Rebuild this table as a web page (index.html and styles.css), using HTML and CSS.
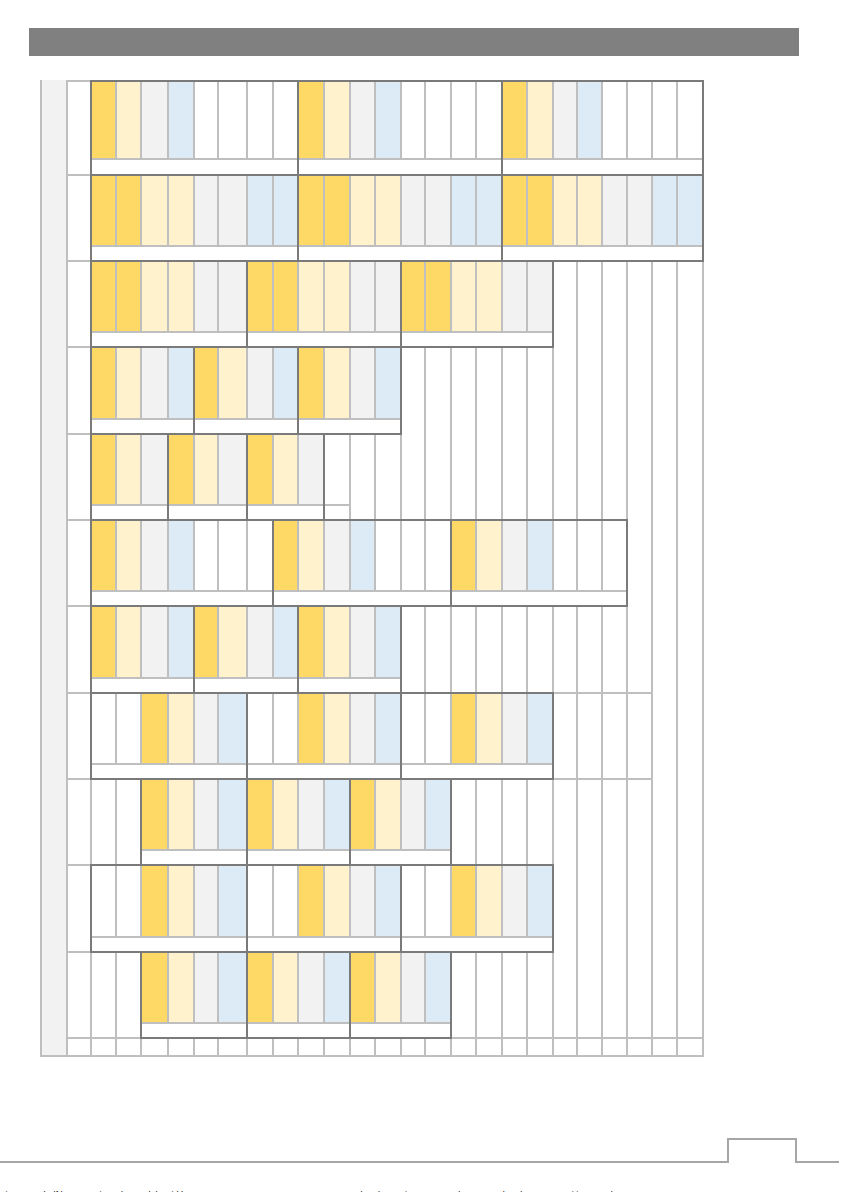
FILE: index.html
```html
<!DOCTYPE html>
<html lang="en">
<head>
<meta charset="utf-8">
<title>Layout sheet</title>
<link rel="stylesheet" href="styles.css">
</head>
<body>
<div class="page">
  <div class="title-bar"></div>

  <div class="sheet">
    <div class="side"></div>
    <div class="rows">
      <!-- row 1 -->
      <div class="row first">
        <div class="hd"></div>
        <div class="blk fr s8"><div class="y"></div><div class="ly"></div><div class="g"></div><div class="b"></div><div></div><div></div><div></div><div></div><div class="lb"></div></div>
        <div class="blk fr s8"><div class="y"></div><div class="ly"></div><div class="g"></div><div class="b"></div><div></div><div></div><div></div><div></div><div class="lb"></div></div>
        <div class="blk fr s8"><div class="y"></div><div class="ly"></div><div class="g"></div><div class="b"></div><div></div><div></div><div></div><div></div><div class="lb"></div></div>
      </div>
      <!-- row 2 -->
      <div class="row">
        <div class="hd"></div>
        <div class="blk fr s8"><div class="y"></div><div class="y"></div><div class="ly"></div><div class="ly"></div><div class="g"></div><div class="g"></div><div class="b"></div><div class="b"></div><div class="lb"></div></div>
        <div class="blk fr s8"><div class="y"></div><div class="y"></div><div class="ly"></div><div class="ly"></div><div class="g"></div><div class="g"></div><div class="b"></div><div class="b"></div><div class="lb"></div></div>
        <div class="blk fr s8"><div class="y"></div><div class="y"></div><div class="ly"></div><div class="ly"></div><div class="g"></div><div class="g"></div><div class="b"></div><div class="b"></div><div class="lb"></div></div>
      </div>
      <!-- row 3 -->
      <div class="row">
        <div class="hd"></div>
        <div class="blk fr s6"><div class="y"></div><div class="y"></div><div class="ly"></div><div class="ly"></div><div class="g"></div><div class="g"></div><div class="lb"></div></div>
        <div class="blk fr s6"><div class="y"></div><div class="y"></div><div class="ly"></div><div class="ly"></div><div class="g"></div><div class="g"></div><div class="lb"></div></div>
        <div class="blk fr s6"><div class="y"></div><div class="y"></div><div class="ly"></div><div class="ly"></div><div class="g"></div><div class="g"></div><div class="lb"></div></div>
        <div class="e"></div><div class="e"></div><div class="e"></div><div class="e"></div><div class="e"></div><div class="e"></div>
      </div>
      <!-- row 4 -->
      <div class="row tall">
        <div class="hd"></div>
        <div class="blk fr s4"><div class="y"></div><div class="ly"></div><div class="g"></div><div class="b"></div><div class="lb"></div></div>
        <div class="blk fr s4"><div class="y"></div><div class="ly"></div><div class="g"></div><div class="b"></div><div class="lb"></div></div>
        <div class="blk fr s4"><div class="y"></div><div class="ly"></div><div class="g"></div><div class="b"></div><div class="lb"></div></div>
        <div class="e"></div><div class="e"></div><div class="e"></div><div class="e"></div><div class="e"></div><div class="e"></div>
        <div class="e mu"></div><div class="e mu"></div><div class="e mu"></div><div class="e mu"></div><div class="e mu"></div><div class="e mu"></div>
      </div>
      <!-- row 5 -->
      <div class="row">
        <div class="hd"></div>
        <div class="blk fr s3"><div class="y"></div><div class="ly"></div><div class="g"></div><div class="lb"></div></div>
        <div class="blk fr s3"><div class="y"></div><div class="ly"></div><div class="g"></div><div class="lb"></div></div>
        <div class="blk fr s3"><div class="y"></div><div class="ly"></div><div class="g"></div><div class="lb"></div></div>
        <div class="blk s1"><div></div><div class="lb"></div></div>
        <div class="e"></div><div class="e"></div>
        <div class="e mu"></div><div class="e mu"></div><div class="e mu"></div><div class="e mu"></div><div class="e mu"></div><div class="e mu"></div>
        <div class="e mu"></div><div class="e mu"></div><div class="e mu"></div><div class="e mu"></div><div class="e mu"></div><div class="e mu"></div>
      </div>
      <!-- row 6 -->
      <div class="row">
        <div class="hd"></div>
        <div class="blk fr s7"><div class="y"></div><div class="ly"></div><div class="g"></div><div class="b"></div><div></div><div></div><div></div><div class="lb"></div></div>
        <div class="blk fr s7"><div class="y"></div><div class="ly"></div><div class="g"></div><div class="b"></div><div></div><div></div><div></div><div class="lb"></div></div>
        <div class="blk fr s7"><div class="y"></div><div class="ly"></div><div class="g"></div><div class="b"></div><div></div><div></div><div></div><div class="lb"></div></div>
        <div class="e mu"></div><div class="e mu"></div><div class="e mu"></div>
      </div>
      <!-- row 7 -->
      <div class="row tall">
        <div class="hd"></div>
        <div class="blk fr s4"><div class="y"></div><div class="ly"></div><div class="g"></div><div class="b"></div><div class="lb"></div></div>
        <div class="blk fr s4"><div class="y"></div><div class="ly"></div><div class="g"></div><div class="b"></div><div class="lb"></div></div>
        <div class="blk fr s4"><div class="y"></div><div class="ly"></div><div class="g"></div><div class="b"></div><div class="lb"></div></div>
        <div class="e"></div><div class="e"></div><div class="e"></div><div class="e"></div><div class="e"></div><div class="e"></div><div class="e"></div><div class="e"></div><div class="e"></div>
        <div class="e mu"></div><div class="e mu"></div><div class="e mu"></div>
      </div>
      <!-- row 8 -->
      <div class="row">
        <div class="hd"></div>
        <div class="blk fr s6"><div></div><div></div><div class="y"></div><div class="ly"></div><div class="g"></div><div class="b"></div><div class="lb"></div></div>
        <div class="blk fr s6"><div></div><div></div><div class="y"></div><div class="ly"></div><div class="g"></div><div class="b"></div><div class="lb"></div></div>
        <div class="blk fr s6"><div></div><div></div><div class="y"></div><div class="ly"></div><div class="g"></div><div class="b"></div><div class="lb"></div></div>
        <div class="e"></div><div class="e"></div><div class="e"></div><div class="e"></div>
        <div class="e mu"></div><div class="e mu"></div>
      </div>
      <!-- row 9 -->
      <div class="row">
        <div class="hd"></div>
        <div class="e"></div><div class="e"></div>
        <div class="blk fr s4"><div class="y"></div><div class="ly"></div><div class="g"></div><div class="b"></div><div class="lb"></div></div>
        <div class="blk fr s4"><div class="y"></div><div class="ly"></div><div class="g"></div><div class="b"></div><div class="lb"></div></div>
        <div class="blk fr s4"><div class="y"></div><div class="ly"></div><div class="g"></div><div class="b"></div><div class="lb"></div></div>
        <div class="e"></div><div class="e"></div><div class="e"></div><div class="e"></div><div class="e"></div><div class="e"></div><div class="e"></div><div class="e"></div>
        <div class="e mu"></div><div class="e mu"></div>
      </div>
      <!-- row 10 -->
      <div class="row tall">
        <div class="hd"></div>
        <div class="blk fr s6"><div></div><div></div><div class="y"></div><div class="ly"></div><div class="g"></div><div class="b"></div><div class="lb"></div></div>
        <div class="blk fr s6"><div></div><div></div><div class="y"></div><div class="ly"></div><div class="g"></div><div class="b"></div><div class="lb"></div></div>
        <div class="blk fr s6"><div></div><div></div><div class="y"></div><div class="ly"></div><div class="g"></div><div class="b"></div><div class="lb"></div></div>
        <div class="e mu"></div><div class="e mu"></div><div class="e mu"></div><div class="e mu"></div><div class="e mu"></div><div class="e mu"></div>
      </div>
      <!-- row 11 -->
      <div class="row">
        <div class="hd"></div>
        <div class="e"></div><div class="e"></div>
        <div class="blk fr s4"><div class="y"></div><div class="ly"></div><div class="g"></div><div class="b"></div><div class="lb"></div></div>
        <div class="blk fr s4"><div class="y"></div><div class="ly"></div><div class="g"></div><div class="b"></div><div class="lb"></div></div>
        <div class="blk fr s4"><div class="y"></div><div class="ly"></div><div class="g"></div><div class="b"></div><div class="lb"></div></div>
        <div class="e"></div><div class="e"></div><div class="e"></div><div class="e"></div>
        <div class="e mu"></div><div class="e mu"></div><div class="e mu"></div><div class="e mu"></div><div class="e mu"></div><div class="e mu"></div>
      </div>
      <!-- row 12 -->
      <div class="row last">
        <div class="hd"></div>
        <div class="e"></div><div class="e"></div><div class="e"></div><div class="e"></div><div class="e"></div><div class="e"></div>
        <div class="e"></div><div class="e"></div><div class="e"></div><div class="e"></div><div class="e"></div><div class="e"></div>
        <div class="e"></div><div class="e"></div><div class="e"></div><div class="e"></div><div class="e"></div><div class="e"></div>
        <div class="e"></div><div class="e"></div><div class="e"></div><div class="e"></div><div class="e"></div><div class="e"></div>
      </div>
    </div>
  </div>

  <div class="footer">
    <div class="f-line f-left"></div>
    <div class="f-tab"></div>
    <div class="f-line f-right"></div>
  </div>

  <div class="notes">
    <span class="n1">Fig. 4.12 Shelf layout variants by module width</span>
    <span class="n2">Colour key: primary, secondary, neutral and reserve positions per bay</span>
  </div>
</div>
</body>
</html>
```

FILE: styles.css
```css
* {
  box-sizing: border-box;
  margin: 0;
  padding: 0;
}

html,
body {
  width: 843px;
  height: 1192px;
  overflow: hidden;
  background: #ffffff;
}

body {
  font-family: "Liberation Sans", Arial, sans-serif;
  color: #000000;
}

.page {
  display: flex;
  flex-direction: column;
  align-items: flex-start;
}

.title-bar {
  margin: 28px 0 0 29px;
  width: 770px;
  height: 28px;
  background: #808080;
}

/* ---------- sheet ---------- */
.sheet {
  margin: 24px 0 0 40px;
  display: flex;
  gap: 2px;
  padding-left: 2px;
  background: #bfbfbf;
}

.side {
  width: 24px;
  margin-bottom: 2px;
  background: #f2f2f2;
}

.rows {
  display: flex;
  flex-direction: column;
  gap: 2px;
  padding: 2px 2px 2px 0;
}

.row {
  display: grid;
  grid-template-columns:
    22px 23px 23px 25px 24px 22px 27px 24px 23px 24px 24px 23px 24px
    22px 24px 23px 24px 23px 24px 22px 23px 23px 23px 23px 24px;
  grid-template-rows: 69px 13px;
  gap: 2px;
}

.row.first {
  grid-template-rows: 76px 14px;
}

.row.tall {
  grid-template-rows: 70px 13px;
}

.row.last {
  grid-template-rows: 16px;
}

.hd,
.e {
  grid-row: 1 / -1;
  background: #ffffff;
}

.mu {
  margin-top: -2px;
}

.blk {
  grid-row: 1 / -1;
  display: grid;
  grid-template-columns: subgrid;
  grid-template-rows: subgrid;
  background: #bfbfbf;
}

.fr {
  outline: 2px solid #7a7a7a;
}

.s1 { grid-column: span 1; }
.s3 { grid-column: span 3; }
.s4 { grid-column: span 4; }
.s6 { grid-column: span 6; }
.s7 { grid-column: span 7; }
.s8 { grid-column: span 8; }

.blk > div {
  grid-row: 1;
  background: #ffffff;
}

.blk > .lb {
  grid-row: 2;
  grid-column: 1 / -1;
  background: #ffffff;
}

.blk > .y  { background: #ffd966; }
.blk > .ly { background: #fff2cc; }
.blk > .g  { background: #f2f2f2; }
.blk > .b  { background: #ddebf7; }

/* ---------- footer ---------- */
.footer {
  margin-top: 81px;
  display: flex;
  align-items: flex-end;
}

.f-line {
  height: 2px;
  background: #a6a6a6;
}

.f-left {
  width: 727px;
}

.f-right {
  width: 42px;
}

.f-tab {
  width: 70px;
  height: 25px;
  border: 2px solid #a6a6a6;
  border-bottom: none;
}

.notes {
  margin-top: 28px;
  display: flex;
  font-size: 9px;
  line-height: 1;
  white-space: nowrap;
}

.n1 {
  width: 349px;
}
```
